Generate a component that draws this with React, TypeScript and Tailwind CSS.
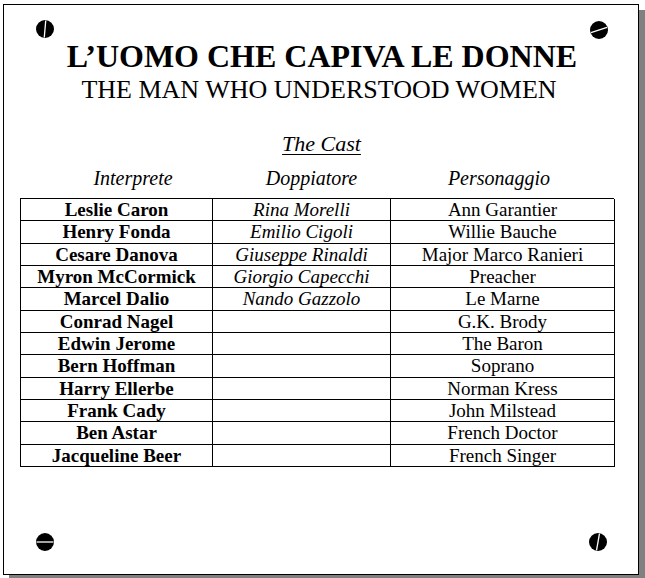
const cast = [
  { actor: "Leslie Caron", voice: "Rina Morelli", role: "Ann Garantier" },
  { actor: "Henry Fonda", voice: "Emilio Cigoli", role: "Willie Bauche" },
  { actor: "Cesare Danova", voice: "Giuseppe Rinaldi", role: "Major Marco Ranieri" },
  { actor: "Myron McCormick", voice: "Giorgio Capecchi", role: "Preacher" },
  { actor: "Marcel Dalio", voice: "Nando Gazzolo", role: "Le Marne" },
  { actor: "Conrad Nagel", voice: "", role: "G.K. Brody" },
  { actor: "Edwin Jerome", voice: "", role: "The Baron" },
  { actor: "Bern Hoffman", voice: "", role: "Soprano" },
  { actor: "Harry Ellerbe", voice: "", role: "Norman Kress" },
  { actor: "Frank Cady", voice: "", role: "John Milstead" },
  { actor: "Ben Astar", voice: "", role: "French Doctor" },
  { actor: "Jacqueline Beer", voice: "", role: "French Singer" },
];

// screw head with a slot at the given angle (0 = vertical)
const Screw = ({ angle, className = "" }: { angle: number; className?: string }) => (
  <svg width="18" height="18" viewBox="0 0 18 18" className={className}>
    <circle cx="9" cy="9" r="9" fill="#000" />
    <line
      x1="9"
      y1="0.5"
      x2="9"
      y2="17.5"
      stroke="#fff"
      strokeWidth="1.3"
      transform={`rotate(${angle} 9 9)`}
    />
  </svg>
);

const Cell = ({ children, className = "" }: { children?: React.ReactNode; className?: string }) => (
  <div
    className={`flex items-center justify-center border-r border-b border-black text-[19px] leading-[21px] whitespace-nowrap ${className}`}
  >
    {children}
  </div>
);

export default function App() {
  return (
    <div className="min-h-[578px] bg-white pl-[3px] pt-[4px] font-['Liberation_Serif','Times_New_Roman',serif] text-black">
      <div className="flex flex-col w-[636px] h-[571px] border border-black bg-white shadow-[6px_6px_0_#808080] pt-[15px] pb-[23px]">
        <div className="flex justify-between pl-[32px] pr-[30px]">
          <Screw angle={5} />
          <Screw angle={72} className="translate-y-px" />
        </div>

        <h1 className="text-center font-bold text-[32px] leading-[36px] pl-[2px]">L’UOMO CHE CAPIVA LE DONNE</h1>
        <h2 className="text-center text-[26px] leading-[31px] pr-[4px]">THE MAN WHO UNDERSTOOD WOMEN</h2>

        <p className="mt-[26px] text-center italic underline underline-offset-[3px] decoration-1 text-[22px] leading-[26px] pl-[1px]">
          The Cast
        </p>

        <div className="mt-[9px] ml-[16px] grid grid-cols-[226px_131px_244px] italic text-[20px] leading-[24px]">
          <span className="text-center">Interprete</span>
          <span className="text-center">Doppiatore</span>
          <span className="text-center">Personaggio</span>
        </div>

        <div className="mt-[8px] ml-[16px] w-[594px] grid grid-cols-[192px_178px_224px] auto-rows-[22.33px] border-t border-l border-black">
          {cast.map((c) => (
            <div key={c.actor} className="contents">
              <Cell className="font-bold">{c.actor}</Cell>
              <Cell className="italic">{c.voice}</Cell>
              <Cell>{c.role}</Cell>
            </div>
          ))}
        </div>

        <div className="mt-auto flex justify-between pl-[32px] pr-[31px]">
          <Screw angle={90} />
          <Screw angle={10} />
        </div>
      </div>
    </div>
  );
}
